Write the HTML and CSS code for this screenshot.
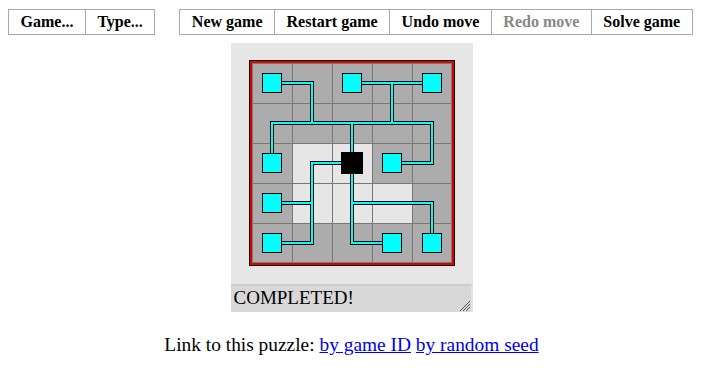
FILE: index.html
```html
<!DOCTYPE html>
<html lang="en">
<head>
    <meta charset="UTF-8">
    <title>Net</title>
    <link rel="stylesheet" href="styles.css">
</head>
<body>
    <div class="menubar">
        <ul class="menu">
            <li>Game...</li>
            <li>Type...</li>
        </ul>
        <ul class="menu">
            <li>New game</li>
            <li>Restart game</li>
            <li>Undo move</li>
            <li class="disabled">Redo move</li>
            <li>Solve game</li>
        </ul>
    </div>

    <div class="puzzle">
        <div class="canvas">
            <svg width="206" height="206" viewBox="0 0 206 206" shape-rendering="crispEdges">
                <!-- frame -->
                <rect x="0" y="0" width="206" height="206" fill="#000"/>
                <rect x="1" y="1" width="204" height="204" fill="#e00000"/>
                <rect x="3" y="3" width="200" height="200" fill="#777"/>
                <!-- tiles -->
                <g fill="#acacac">
                    <rect x="4" y="4" width="39" height="39"/><rect x="44" y="4" width="39" height="39"/><rect x="84" y="4" width="39" height="39"/><rect x="124" y="4" width="39" height="39"/><rect x="164" y="4" width="38" height="39"/>
                    <rect x="4" y="44" width="39" height="39"/><rect x="44" y="44" width="39" height="39"/><rect x="84" y="44" width="39" height="39"/><rect x="124" y="44" width="39" height="39"/><rect x="164" y="44" width="38" height="39"/>
                    <rect x="4" y="84" width="39" height="39"/><rect x="124" y="84" width="39" height="39"/><rect x="164" y="84" width="38" height="39"/>
                    <rect x="4" y="124" width="39" height="39"/><rect x="164" y="124" width="38" height="39"/>
                    <rect x="4" y="164" width="39" height="38"/><rect x="44" y="164" width="39" height="38"/><rect x="84" y="164" width="39" height="38"/><rect x="124" y="164" width="39" height="38"/><rect x="164" y="164" width="38" height="38"/>
                </g>
                <g fill="#e6e6e6">
                    <rect x="44" y="84" width="39" height="39"/><rect x="84" y="84" width="39" height="39"/>
                    <rect x="44" y="124" width="39" height="39"/><rect x="84" y="124" width="39" height="39"/><rect x="124" y="124" width="39" height="39"/>
                </g>
                <!-- wire outlines -->
                <g fill="#000">
                    <rect x="21" y="21" width="44" height="4"/>
                    <rect x="61" y="21" width="4" height="44"/>
                    <rect x="101" y="21" width="84" height="4"/>
                    <rect x="141" y="21" width="4" height="44"/>
                    <rect x="21" y="61" width="164" height="4"/>
                    <rect x="21" y="61" width="4" height="44"/>
                    <rect x="101" y="61" width="4" height="44"/>
                    <rect x="181" y="61" width="4" height="44"/>
                    <rect x="141" y="101" width="44" height="4"/>
                    <rect x="61" y="101" width="44" height="4"/>
                    <rect x="61" y="101" width="4" height="84"/>
                    <rect x="21" y="141" width="44" height="4"/>
                    <rect x="21" y="181" width="44" height="4"/>
                    <rect x="101" y="101" width="4" height="84"/>
                    <rect x="101" y="141" width="84" height="4"/>
                    <rect x="181" y="141" width="4" height="44"/>
                    <rect x="101" y="181" width="44" height="4"/>
                </g>
                <!-- wire cores -->
                <g fill="#00ffff">
                    <rect x="22" y="22" width="42" height="2"/>
                    <rect x="62" y="22" width="2" height="42"/>
                    <rect x="102" y="22" width="82" height="2"/>
                    <rect x="142" y="22" width="2" height="42"/>
                    <rect x="22" y="62" width="162" height="2"/>
                    <rect x="22" y="62" width="2" height="42"/>
                    <rect x="102" y="62" width="2" height="42"/>
                    <rect x="182" y="62" width="2" height="42"/>
                    <rect x="142" y="102" width="42" height="2"/>
                    <rect x="62" y="102" width="42" height="2"/>
                    <rect x="62" y="102" width="2" height="82"/>
                    <rect x="22" y="142" width="42" height="2"/>
                    <rect x="22" y="182" width="42" height="2"/>
                    <rect x="102" y="102" width="2" height="82"/>
                    <rect x="102" y="142" width="82" height="2"/>
                    <rect x="182" y="142" width="2" height="42"/>
                    <rect x="102" y="182" width="42" height="2"/>
                </g>
                <!-- endpoints -->
                <g fill="#00ffff" stroke="#000" stroke-width="1">
                    <rect x="13.5" y="13.5" width="19" height="19"/>
                    <rect x="93.5" y="13.5" width="19" height="19"/>
                    <rect x="173.5" y="13.5" width="19" height="19"/>
                    <rect x="13.5" y="93.5" width="19" height="19"/>
                    <rect x="133.5" y="93.5" width="19" height="19"/>
                    <rect x="13.5" y="133.5" width="19" height="19"/>
                    <rect x="13.5" y="173.5" width="19" height="19"/>
                    <rect x="133.5" y="173.5" width="19" height="19"/>
                    <rect x="173.5" y="173.5" width="19" height="19"/>
                </g>
                <!-- source -->
                <rect x="92" y="92" width="22" height="22" fill="#000"/>
            </svg>
        </div>
        <div class="status">
            <span>COMPLETED!</span>
            <svg class="grip" width="11" height="11" viewBox="0 0 11 11">
                <line x1="11" y1="1" x2="1" y2="11" stroke="#555" stroke-width="1"/>
                <line x1="11" y1="4" x2="4" y2="11" stroke="#555" stroke-width="1"/>
                <line x1="11" y1="7" x2="7" y2="11" stroke="#555" stroke-width="1"/>
            </svg>
        </div>
    </div>

    <p class="links">Link to this puzzle: <a href="#">by game ID</a> <a href="#">by random seed</a></p>
</body>
</html>
```

FILE: styles.css
```css
body{
    margin: 8px;
    font-family: "Liberation Serif", "Times New Roman", serif;
    color: #000;
    background-color: #fff;
}

.menubar{
    display: flex;
    gap: 24px;
    margin-top: 1px;
}

.menu{
    display: flex;
    flex-shrink: 0;
    list-style: none;
    margin: 0;
    padding: 0;
    border: 1px solid #aaa;
}
.menu li{
    font-size: 16px;
    font-weight: bold;
    white-space: nowrap;
    padding: 3px 11.5px;
    line-height: 18px;
    border-left: 1px solid #aaa;
}
.menu li:first-child{
    border-left: none;
}
.menu .disabled{
    color: #888;
}

.puzzle{
    width: 242px;
    margin: 8px auto 0;
}
.canvas{
    height: 241px;
    padding: 17px 18px 0;
    box-sizing: border-box;
    background-color: #e6e6e6;
}
.canvas svg{
    display: block;
}

.status{
    height: 28px;
    box-sizing: border-box;
    display: flex;
    justify-content: space-between;
    background-color: #d8d8d8;
    border-top: 2px solid #cccccc;
    border-right: 2px solid #e2e2e2;
    font-size: 19px;
    padding-left: 3px;
    line-height: 24px;
}
.grip{
    align-self: flex-end;
    margin: 0 1px 1px 0;
}

.links{
    text-align: center;
    font-size: 19.4px;
    margin-top: 22px;
}
.links a{
    color: #00e;
}
```
